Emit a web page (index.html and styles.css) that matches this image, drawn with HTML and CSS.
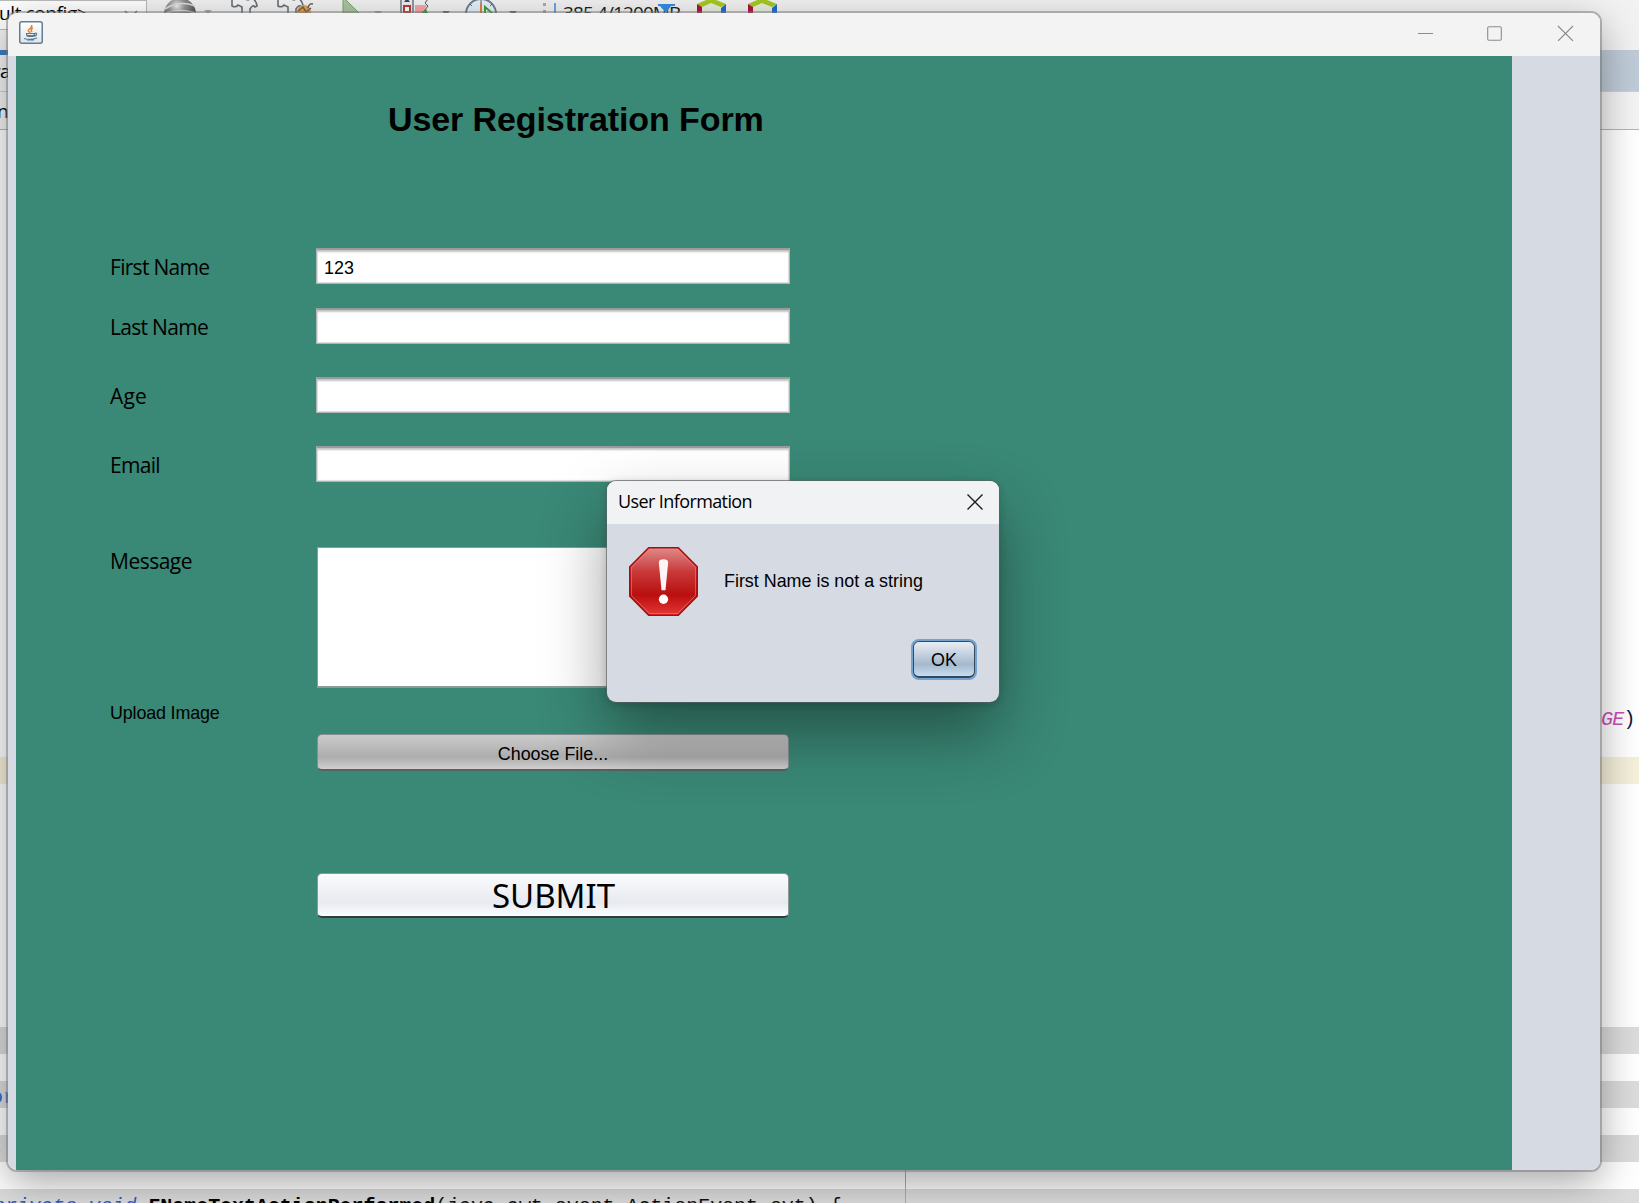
FILE: index.html
```html
<!DOCTYPE html>
<html lang="en">
<head>
<meta charset="utf-8">
<title>User Registration Form</title>
<link rel="stylesheet" href="styles.css">
</head>
<body>
<div class="desktop">
  <div class="ide">
    <div class="toolbar">
      <div class="config"><span>ult config&gt;</span><svg width="16" height="10" viewBox="0 0 16 10"><path d="M2 1l6 6 6-6" fill="none" stroke="#666" stroke-width="1.3"/></svg></div>
      <svg class="tools" width="640" height="29" viewBox="0 0 640 29">
        <defs>
          <radialGradient id="ball" cx=".4" cy=".25" r=".6"><stop offset="0" stop-color="#eee"/><stop offset=".4" stop-color="#999"/><stop offset="1" stop-color="#555"/></radialGradient>
        </defs>
        <circle cx="33" cy="14" r="16" fill="url(#ball)"/>
        <path d="M18 9q14-9 30-3M19 13q15-5 29 0" fill="none" stroke="#ddd" stroke-width="1.5"/>
        <path d="M57 10h8l-4 4z" fill="#aaa"/>
        <g fill="#f4f4f4" stroke="#66717b" stroke-width="1.6">
          <path d="M85-3v9q4 2 6-1l4 2v8h8V9q3-5 5-2l2-1q-1-6-5-8l-4 2-6-2z"/>
          <path d="M131-3v9q4 2 6-1l4 2v8h8V9q3-5 5-2l2-1q-1-6-5-8l-4 2-6-2z"/>
        </g>
        <circle cx="157" cy="12" r="7" fill="#dfa050"/>
        <path d="M151 11l5-4 3 5 5-4m-3 0q1-5 5-4" fill="none" stroke="#6d6255" stroke-width="1.5"/>
        <path d="M196-3l19 19-19 10z" fill="#adc3a4" stroke="#76a768"/>
        <path d="M227 11h8l-4 4z" fill="#aaa"/>
        <path d="M254-2h12v18h-12z" fill="#eee" stroke="#778" stroke-width="1.5"/>
        <path d="M257 6h6v6h-6z" fill="#fff" stroke="#b53f38" stroke-width="2"/><path d="M257 2l3-4 3 4z" fill="#445"/>
        <path d="M268 5h12l2-5-4 9 2 5h-12z" fill="#f6a7a8"/><path d="M281-1l-3 4 3 3-3 4 2 3" fill="none" stroke="#555"/><path d="M274 13l5-4 2 4z" fill="#339b36"/>
        <path d="M295 11h8l-4 4z" fill="#666"/>
        <circle cx="334" cy="14" r="15" fill="#e8f0f8" stroke="#6c7e8e" stroke-width="2"/>
        <path d="M334 0v3M323 4l2 2M345 4l-2 2" stroke="#468"/><path d="M334 3v10" stroke="#df8143" stroke-width="2"/><path d="M338 7v9l8-2z" fill="#fff" stroke="#38a338" stroke-width="2"/>
        <path d="M362 11h8l-4 4z" fill="#666"/>
        <path d="M396 3h3v3h-3zm0 7h3v3h-3z" fill="#aaa"/>
        <path d="M408 3v14" stroke="#348de5" stroke-width="1.5"/>
        <g id="cube"><path d="M550 4l14-6 15 6v18h-29z" fill="#e9eddf"/><path d="M550 4l14-6 15 6-5 3-10-4-9 4z" fill="#a5c91f"/><path d="M550 4l5 3v9h-5z" fill="#ac163e"/><path d="M579 4l-5 4v9h5z" fill="#236bcc"/></g>
        <use href="#cube" x="51"/>
      </svg>
      <span class="memory">385.4/1200MB</span>
      <svg class="memory-mark" width="18" height="12" viewBox="0 0 18 12"><path d="M0 1h17v2h-4l-5 7-6-7H0z" fill="#348de5"/></svg>
    </div>
    <div class="tabs"><span>va</span></div>
    <div class="crumbs"><span>n</span></div>
    <div class="code">
      <div class="line tail"><i>GE</i>)</div>
      <div class="line current"></div>
      <div class="line fold">-</div>
      <div class="line fold">or</div>
      <div class="line fold">-</div>
      <div class="line fold method"><i>private void</i> <b>FNameTextActionPerformed</b>(java.awt.event.ActionEvent evt) {</div>
      <div class="margin-line"></div>
    </div>
  </div>

  <div class="window-shadow"></div>
  <div class="window">
    <div class="titlebar">
      <svg class="java" width="24" height="23" viewBox="0 0 24 23">
        <defs><linearGradient id="tile" x2="0" y2="1"><stop offset="0" stop-color="#fff"/><stop offset="1" stop-color="#e1e4e8"/></linearGradient></defs>
        <rect x=".75" y=".75" width="22.5" height="21.5" rx="2" fill="url(#tile)" stroke="#5f7f99" stroke-width="1.5"/>
        <path d="M12.5 4q1 2-2 4t1 3.500M14 7q-3 1-1 4" fill="none" stroke="#ee8127" stroke-width="1.5"/>
        <path d="M7 12.500h9M7.500 12.500q0 3 2 3h4q2 0 2-3 2.500-1 2 1t-3 1.500M8.500 14.500h6M5 17.500q7 2 13-.5M8 19h7" fill="none" stroke="#557a96" stroke-width="1.2"/>
      </svg>
      <svg class="controls" width="157" height="16" viewBox="0 0 157 16">
        <g fill="none" stroke="#8c8c8c" stroke-width="1.100"><path d="M0 8.500h15"/><rect x="69.700" y="1.700" width="13.600" height="13.600" rx="1.200"/><path d="M140 1l15 15M155 1l-15 15"/></g>
      </svg>
    </div>
    <main class="panel">
      <h1>User Registration Form</h1>
      <div class="row first"><span class="label tight">First Name</span><div class="field">123</div></div>
      <div class="row"><span class="label tight">Last Name</span><div class="field"></div></div>
      <div class="row"><span class="label wide">Age</span><div class="field"></div></div>
      <div class="row"><span class="label tight">Email</span><div class="field"></div></div>
      <div class="row message"><span class="label">Message</span><div class="area"></div></div>
      <div class="upload">Upload Image</div>
      <div class="button choose">Choose File...</div>
      <div class="button submit">SUBMIT</div>
    </main>
  </div>

  <div class="dialog">
    <div class="dialog-title"><span>User Information</span>
      <svg width="16" height="16" viewBox="0 0 16 16"><path d="M.5.5l15 15M15.500.5l-15 15" stroke="#1a1a1a" stroke-width="1.400"/></svg>
    </div>
    <div class="dialog-body">
      <div class="notice">
        <svg width="69" height="69" viewBox="0 0 70 70">
          <defs><linearGradient id="stop" x2="0" y2="1"><stop offset="0" stop-color="#e08a8a"/><stop offset=".35" stop-color="#c93a3a"/><stop offset=".7" stop-color="#b90f0f"/><stop offset="1" stop-color="#e73636"/></linearGradient></defs>
          <path d="M20 .8h30L69.200 20v30L50 69.200H20L.8 50V20z" fill="url(#stop)" stroke="#ad0c0c" stroke-width="1.600"/>
          <path d="M20.800 2.500h28.400l18.300 18.300v28.400L49.200 67.500H20.800L2.500 49.200V20.800z" fill="none" stroke="#f08080" stroke-opacity=".6"/>
          <path d="M30.300 16q0-3.500 4.700-3.500t4.700 3.500L37 44h-4z" fill="#fdf5f5"/><circle cx="35" cy="53" r="4.700" fill="#fff"/>
        </svg>
        <span>First Name is not a string</span>
      </div>
      <div class="ok">OK</div>
    </div>
  </div>
</div>
</body>
</html>
```
FILE: styles.css
```css
* { box-sizing: border-box; }
body { margin: 0; overflow: hidden; background: #fff; color: #000; }
svg { display: block; flex: none; }
.desktop { position: relative; width: 1639px; height: 1203px; overflow: hidden; }

/* editor window in the back */
.ide { display: flex; flex-direction: column; height: 1203px; font: 19px "Open Sans", sans-serif; }
.toolbar { position: relative; display: flex; height: 50px; flex: none; background: #f2f2f2; }
.config { display: flex; justify-content: space-between; width: 147px; height: 30px; padding-right: 7px; background: #fff; border: 1px solid #bbb; border-left: 0; line-height: 25px; letter-spacing: -.4px; white-space: nowrap; }
.config span { margin-left: -1px; }
.config svg { margin-top: 9px; }
.memory { position: absolute; left: 563px; top: 0; line-height: 26px; letter-spacing: -.9px; color: #222; }
.memory-mark { position: absolute; left: 658px; top: 3px; }
.tabs { height: 41px; flex: none; line-height: 42px; background: linear-gradient(#3b7ec5, #3b7ec5) 0 0 / 20px 5px no-repeat, linear-gradient(90deg, #f4f4f4 1500px, #bfcbd8 0); }
.tabs span { margin-left: -9px; letter-spacing: -.5px; }
.crumbs span { margin-left: -3px; }
.crumbs { height: 39px; flex: none; line-height: 38px; background: #f4f4f4; border-top: 1px solid #d0d0d0; border-bottom: 1px solid #b5b5b5; }
.code { position: relative; flex: 1; padding-top: 576px; background: #fff; font: 20px/27px "Liberation Mono", monospace; }
.line { height: 27px; margin-bottom: 27px; white-space: pre; }
.tail { margin-bottom: 24px; padding-left: 1601px; color: #14143c; letter-spacing: -.8px; }
.tail i { color: #c94fb8; }
.current { background: #f5f0da; margin-bottom: 243px; }
.fold { background: #dcdcdc; color: #2b6fd7; }
.fold:not(.method) { text-indent: -9px; line-height: 33px; }
.method { margin-bottom: 0; color: #111; text-indent: -7px; line-height: 36px; letter-spacing: -.05px; }
.method i { color: #2b5fc7; }
.method b { color: #000; }
.margin-line { position: absolute; left: 905px; top: 0; bottom: 0; width: 1px; background: #c79bc3; }

/* registration window */
.window, .window-shadow { position: absolute; left: 8px; top: 13px; width: 1592px; height: 1157px; border-radius: 9px; }
.window-shadow { box-shadow: 0 0 0 2px rgba(120,120,120,.5), 0 12px 40px rgba(0,0,0,.36); }
.window { display: flex; flex-direction: column; overflow: hidden; background: #d6dae2; }
.titlebar { display: flex; justify-content: space-between; height: 43px; flex: none; background: #f3f3f3; padding: 8px 27px 0 11px; }
.controls { margin: 4px -2px 0 0; }
.panel { flex: 1; width: 1496px; margin-left: 8px; padding: 43px 0 0 94px; background: #3a8876; font: 17.9px "Liberation Sans", sans-serif; }
h1 { margin: 0 0 109px 278px; font: bold 34px/40px "Liberation Sans", sans-serif; letter-spacing: -.1px; white-space: nowrap; }
.row { display: grid; grid-template-columns: 206px 474px; margin-bottom: 33px; }
.row.first { margin-bottom: 24px; }
.label { font: 21px/38px "Open Sans", sans-serif; height: 36px; white-space: nowrap; letter-spacing: -.5px; }
.label.tight { letter-spacing: -.7px; }
.label.wide { letter-spacing: .2px; }
.field { height: 36px; padding: 1px 0 0 7px; line-height: 34px; background: #fff; border: 1px solid #aeb5b5; border-top: 2px solid #999c9d; box-shadow: inset 0 3px 2px -1px #c5c5c5, inset 0 0 1px 1px #ddd; }
.row.message { margin: 65px 0 15px; }
.message .label { line-height: 28px; }
.area { height: 141px; margin-left: 1px; background: #fff; border: 1px solid #8a9b9c; border-bottom-width: 2px; }
.upload { height: 20px; line-height: 20px; letter-spacing: -.15px; }
.button { display: flex; align-items: center; justify-content: center; width: 472px; margin-left: 207px; border-radius: 5px; }
.choose { height: 37px; margin-top: 11px; padding-top: 4px; border: 1px solid #83908e; border-bottom: 2px solid #59625f; background: linear-gradient(#cbcbcb, #adadad 65%, #d0d0d0); }
.submit { height: 45px; margin-top: 102px; padding: 1px 0 0 1px; border: 1px solid #8f9795; border-bottom: 2px solid #333b42; background: linear-gradient(#fbfbfd, #e7eaf0 68%, #fcfdff); font: 33px/40px "Noto Sans", sans-serif; }

/* error dialog */
.dialog { position: absolute; left: 607px; top: 481px; width: 392px; height: 221px; display: flex; flex-direction: column; border-radius: 9px; background: #d6dae2; box-shadow: 0 0 0 1px rgba(90,100,100,.65), 0 2px 8px rgba(0,0,0,.2), 0 32px 64px rgba(0,0,0,.38); font: 17.9px "Liberation Sans", sans-serif; }
.dialog-title { display: flex; justify-content: space-between; height: 43px; padding: 13px 16px 0 11px; border-radius: 9px 9px 0 0; background: #f1f2f4; }
.dialog-title span { margin-top: -1px; font: 18px/16px "Open Sans", sans-serif; letter-spacing: -.6px; }
.dialog-body { display: flex; flex-direction: column; align-items: flex-end; padding: 23px 24px 0 22px; }
.notice { display: flex; align-items: center; gap: 26px; width: 100%; height: 69px; white-space: nowrap; }
.ok { width: 62px; height: 37px; margin-top: 25px; line-height: 37px; text-align: center; border: 1px solid #34495e; border-bottom-width: 2px; border-radius: 6px; background: linear-gradient(#e9edf4, #a5b9cd 65%, #c7dcf0); box-shadow: 0 0 0 2px #73a4d1; }
```
